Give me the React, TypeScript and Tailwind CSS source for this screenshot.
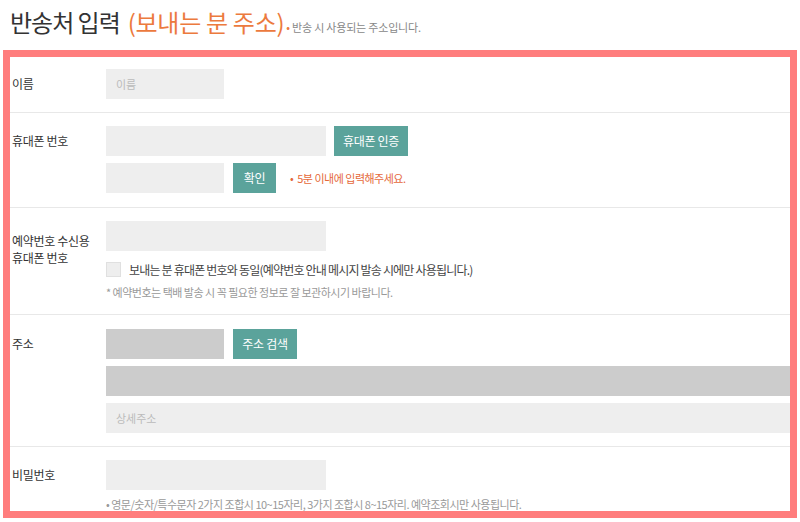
import React from "react"

const font = { fontFamily: '"Noto Sans CJK KR", "Noto Sans", sans-serif' }

function Label({ children, className = "" }: { children: React.ReactNode; className?: string }) {
    return (
        <div className={"w-[96px] shrink-0 pl-[2px] text-[12px] tracking-[-0.3px] text-[#333] " + className}>
            {children}
        </div>
    )
}

function Field({ w, gray = false, placeholder }: { w: string; gray?: boolean; placeholder?: string }) {
    return (
        <div
            className={
                "h-[30px] flex items-center px-[10px] text-[11px] text-[#bbb] " +
                w +
                (gray ? " bg-[#cccccc]" : " bg-[#eeeeee]")
            }
        >
            {placeholder}
        </div>
    )
}

function Btn({ children, w }: { children: React.ReactNode; w: string }) {
    return (
        <button className={"h-[30px] bg-[#5ba39b] text-white text-[12px] tracking-[-0.3px] flex items-center justify-center " + w}>
            {children}
        </button>
    )
}

export default function App() {
    return (
        <div className="w-[800px] h-[522px] bg-white overflow-hidden" style={font}>
            <div className="h-[50px] flex items-baseline pl-[10px] pt-[4px]">
                <span className="text-[24px] tracking-[-1px] text-[#333]">반송처 입력</span>
                <span className="ml-[8px] text-[24px] tracking-[-0.3px] text-[#ec7a3e]">(보내는 분 주소)</span>
                <span className="ml-[2px] text-[11px] tracking-[-0.2px] text-[#888]">
                    <span className="text-[#ec7a3e]">•</span> 반송 시 사용되는 주소입니다.
                </span>
            </div>

            <div className="mx-[3px] h-[468px] border-[7px] border-[#ff7d7d] overflow-hidden">
                {/* 이름 */}
                <div className="flex border-b border-[#e8e8e8] pt-[12px] pb-[13px]">
                    <Label className="leading-[30px]">이름</Label>
                    <Field w="w-[118px]" placeholder="이름" />
                </div>

                {/* 휴대폰 번호 */}
                <div className="flex border-b border-[#e8e8e8] pt-[13px] pb-[14px]">
                    <Label className="leading-[30px]">휴대폰 번호</Label>
                    <div className="flex flex-col gap-[7px]">
                        <div className="flex gap-[8px]">
                            <Field w="w-[220px]" />
                            <Btn w="w-[74px]">휴대폰 인증</Btn>
                        </div>
                        <div className="flex items-center">
                            <Field w="w-[118px]" />
                            <div className="ml-[9px]">
                                <Btn w="w-[43px]">확인</Btn>
                            </div>
                            <span className="ml-[14px] text-[11px] tracking-[-0.5px] text-[#e5683a]">
                                <span className="mr-[4px]">•</span>5분 이내에 입력해주세요.
                            </span>
                        </div>
                    </div>
                </div>

                {/* 예약번호 수신용 */}
                <div className="flex border-b border-[#e8e8e8] pt-[13px] pb-[14px]">
                    <Label className="pt-[11px] leading-[17px]">
                        예약번호 수신용
                        <br />
                        휴대폰 번호
                    </Label>
                    <div className="flex flex-col">
                        <Field w="w-[220px]" />
                        <div className="flex items-center mt-[10px] h-[17px]">
                            <div className="w-[15px] h-[15px] bg-[#eeeeee] border border-[#e0e0e0]" />
                            <span className="ml-[8px] text-[12px] leading-[17px] tracking-[-0.8px] text-[#444]">
                                보내는 분 휴대폰 번호와 동일(예약번호 안내 메시지 발송 시에만 사용됩니다.)
                            </span>
                        </div>
                        <div className="mt-[6px] text-[11px] leading-[16px] tracking-[-0.5px] text-[#999]">
                            * 예약번호는 택배 발송 시 꼭 필요한 정보로 잘 보관하시기 바랍니다.
                        </div>
                    </div>
                </div>

                {/* 주소 */}
                <div className="flex border-b border-[#e8e8e8] pt-[14px] pb-[13px]">
                    <Label className="leading-[30px]">주소</Label>
                    <div className="flex flex-col gap-[7px] flex-1">
                        <div className="flex gap-[9px]">
                            <Field w="w-[118px]" gray />
                            <Btn w="w-[64px]">주소 검색</Btn>
                        </div>
                        <Field w="w-full" gray />
                        <Field w="w-full" placeholder="상세주소" />
                    </div>
                </div>

                {/* 비밀번호 */}
                <div className="flex pt-[13px]">
                    <Label className="leading-[30px]">비밀번호</Label>
                    <div className="flex flex-col">
                        <Field w="w-[220px]" />
                        <div className="mt-[6px] text-[11px] leading-[16px] tracking-[-0.5px] text-[#999]">
                            • 영문/숫자/특수문자 2가지 조합시 10~15자리, 3가지 조합시 8~15자리. 예약조회시만 사용됩니다.
                        </div>
                    </div>
                </div>
            </div>
        </div>
    )
}
